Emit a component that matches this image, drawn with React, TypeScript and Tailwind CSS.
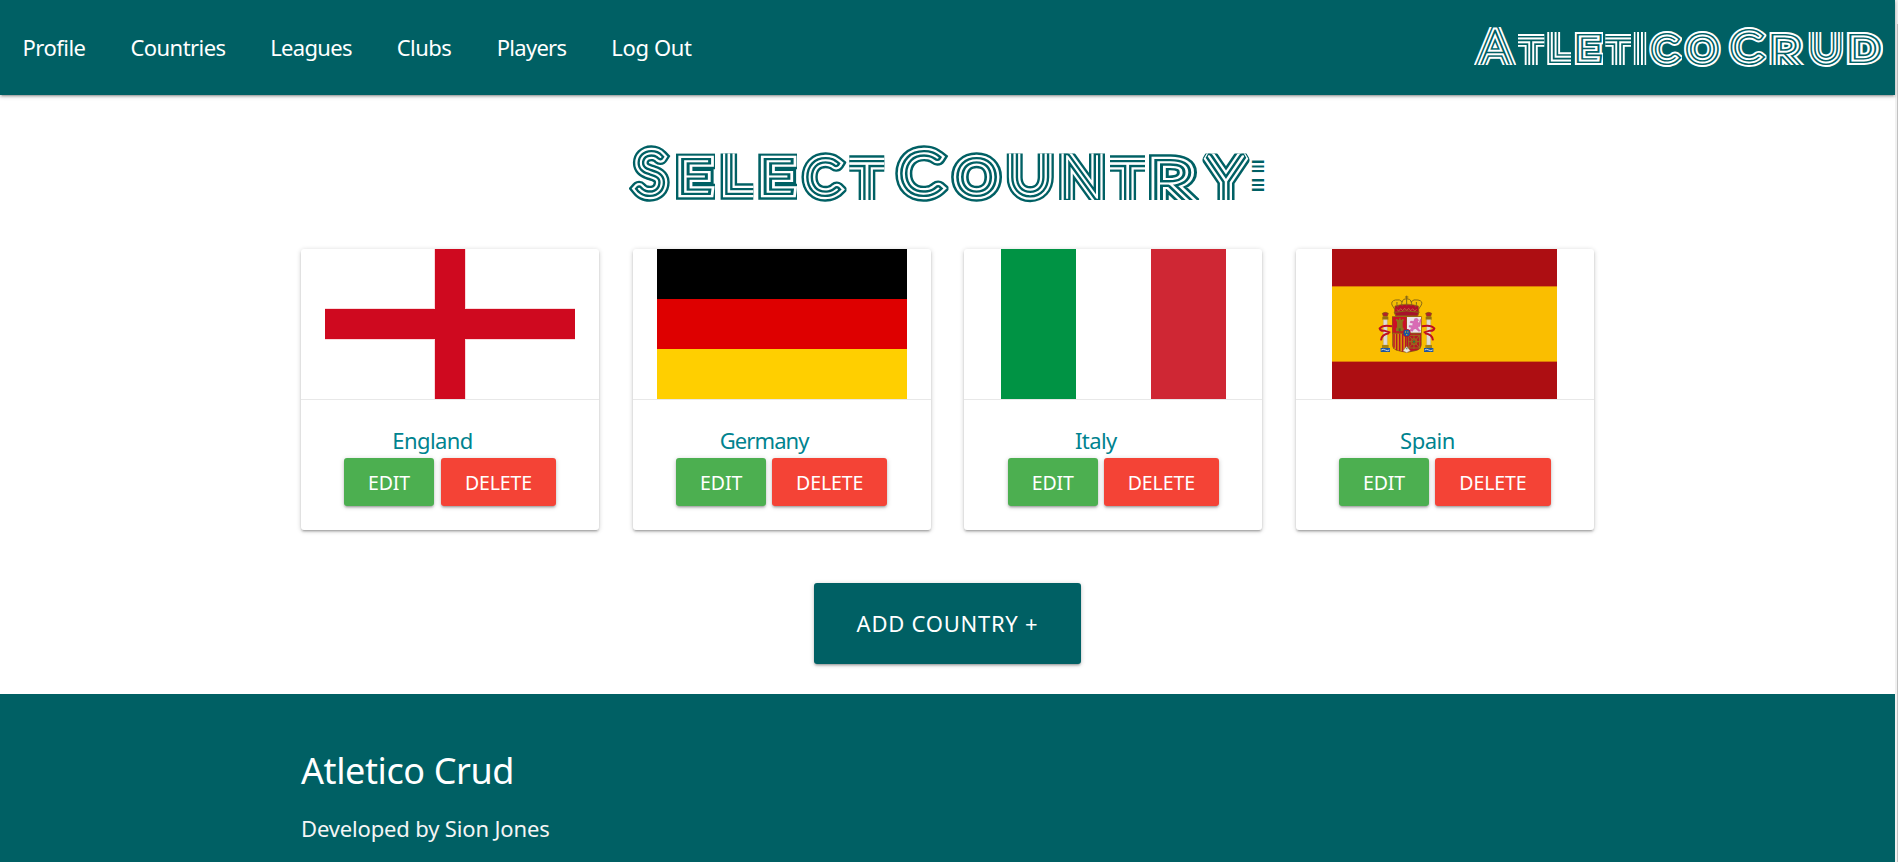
const FONT = "font-['Noto_Sans','Open_Sans',sans-serif]";
const SHADOW =
  'shadow-[0_2px_2px_0_rgba(0,0,0,0.14),0_3px_1px_-2px_rgba(0,0,0,0.12),0_1px_5px_0_rgba(0,0,0,0.2)]';

// ch, box left, box right, box top, box bottom, ink centre, font size, baseline, horizontal stretch, ink offset (em)
type Letter = [string, number, number, number, number, number, number, number, number, number];

const HEADING: Letter[] = [
  ['S', 9, 53, 48, 109, 30.7, 57, 98.7, 1, 0],
  ['e', 56, 95, 58.5, 105, 76.8, 43.4, 97.3, 1.25, 0.04],
  ['l', 100, 133.3, 58.5, 105, 124.5, 91, 97.3, 1, 0.045],
  ['e', 138.3, 177, 58.5, 105, 159.1, 43.4, 97.3, 1.25, 0.04],
  ['c', 180, 226.5, 55, 109, 203.5, 47.7, 98.7, 1.02, 0.02],
  ['t', 229.3, 264.3, 58.5, 105, 246.8, 105, 141.4, 1, 0],
  [' ', 0, 0, 0, 0, 270, 43, 97.3, 1, 0],
  ['C', 274, 328.5, 48, 109, 301.5, 58, 98.7, 1.06, 0.02],
  ['o', 330, 383, 55, 109, 356.5, 47.7, 98.7, 1.1, 0],
  ['u', 386.5, 434, 58.5, 109, 410.3, 63, 98.7, 1, 0],
  ['n', 439, 485, 58.5, 105, 462, 59, 103, 1, 0],
  ['t', 490, 525, 58.5, 105, 507.5, 105, 141.4, 1, 0],
  ['r', 529, 579.5, 58.5, 105, 555, 60, 109.2, 1.25, 0.045],
  ['y', 582.5, 629.5, 58.5, 105, 606, 62, 105, 1.06, 0],
];

const LOGO: Letter[] = [
  ['A', 4, 46.5, 27, 65, 25, 48, 64, 1, 0],
  ['t', 48, 74.3, 32, 65, 61.2, 77, 93.3, 1, 0],
  ['l', 76.7, 101, 32, 65, 94.8, 65, 58.9, 1, 0.045],
  ['e', 104.7, 133, 32, 65, 119.6, 29, 58.9, 1.23, 0.04],
  ['t', 135.3, 161, 32, 65, 148.2, 77, 93.3, 1, 0],
  ['i', 163.7, 176.3, 32, 65, 170, 80, 76, 1, 0],
  ['c', 178, 212, 29, 69, 195.5, 34, 60.8, 1.02, 0.02],
  ['o', 213.5, 251.5, 29, 69, 232.5, 34, 60.8, 1.08, 0],
  [' ', 0, 0, 0, 0, 254, 31, 59, 1, 0],
  ['C', 257.5, 296.5, 24, 69, 277.3, 40.7, 60.8, 1.04, 0.02],
  ['r', 299.3, 336, 32, 65, 317.6, 43, 69, 1.17, 0.045],
  ['u', 338.3, 373.5, 32, 69, 356, 45, 60.8, 1, 0],
  ['d', 376, 413.3, 31, 66, 394.1, 29, 58.9, 1.26, 0],
];

type StripedProps = {
  id: string;
  letters: Letter[];
  colon?: boolean;
  width: number;
  height: number;
  rings: number[];
  ink: string;
  paper: string;
};

// Neon-tube lettering: a hairline face stroked by alternating ink and paper layers.
function StripedText({ id, letters, colon, width, height, rings, ink, paper }: StripedProps) {
  return (
    <svg className="shrink-0" width={width} height={height} viewBox={`0 0 ${width} ${height}`}>
      <defs>
        {letters.map(([, x0, x1, y0, y1], i) => (
          <clipPath key={i} id={`${id}-${i}`}>
            <rect x={x0} y={y0} width={x1 - x0} height={y1 - y0} />
          </clipPath>
        ))}
      </defs>
      <g stroke={ink} fill={ink} strokeWidth={rings[0]} strokeMiterlimit={2}>
        <g id={id} className="font-[Lato] font-thin uppercase" textAnchor="middle">
          {letters.map(([ch, , , , , cx, size, base, sx, off], i) => (
            <g key={i} clipPath={`url(#${id}-${i})`}>
              <text xmlSpace="preserve" fontSize={size} transform={`translate(${cx - off * size * sx} ${base}) scale(${sx} 1)`}>
                {ch}
              </text>
            </g>
          ))}
        </g>
      </g>
      {rings.slice(1).map((w, i) => {
        const c = i % 2 === 0 ? paper : ink;
        return <use key={i} href={`#${id}`} stroke={c} fill={c} strokeWidth={w} strokeMiterlimit={2} />;
      })}
      {colon && (
        <>
          <text x="638" y="92" textAnchor="middle" fontSize="43" fill={ink} stroke={ink} strokeWidth="8" className="font-['Liberation_Sans']">
            :
          </text>
          <path d="M630 64.2h16M630 69.2h16M630 73.7h16M630 78.4h16M630 82.8h16M630 87.7h16M630 92.3h16M630 97.3h16" stroke={paper} strokeWidth="2.4" />
        </>
      )}
    </svg>
  );
}

const nav = [
  { label: 'Profile', cls: 'w-[108px] tracking-[-0.5px]' },
  { label: 'Countries', cls: 'w-[140px] tracking-[-0.55px]' },
  { label: 'Leagues', cls: 'w-[126px] tracking-[-0.7px]' },
  { label: 'Clubs', cls: 'w-[100px] tracking-[-0.5px]' },
  { label: 'Players', cls: 'w-[115px] tracking-[-0.7px]' },
  { label: 'Log Out', cls: 'w-[125px] tracking-[-0.35px]' },
];

function England() {
  return (
    <svg width="250" height="150" viewBox="0 0 250 150">
      <path fill="#f9d9dc" d="M109 0h32v59h109v32H141v59h-32V91H0V59h109z" />
      <path fill="#cf091f" d="M110 0h30v60h110v30H140v60h-30V90H0V60h110z" />
    </svg>
  );
}

function Germany() {
  return (
    <svg width="250" height="150" viewBox="0 0 250 150">
      <path d="M0 0h250v50H0z" fill="#000" />
      <path d="M0 50h250v50H0z" fill="#de0000" />
      <path d="M0 100h250v50H0z" fill="#ffcf00" />
    </svg>
  );
}

function Italy() {
  return (
    <svg width="225" height="150" viewBox="0 0 225 150">
      <path d="M0 0h75v150H0z" fill="#009344" />
      <path d="M150 0h75v150h-75z" fill="#cf2734" />
    </svg>
  );
}

function Pillar({ x }: { x: number }) {
  return (
    <g transform={`translate(${x} 0)`}>
      <path d="M-9 235q9-6 18 0l-3 9H-6z" fill="#b3202a" stroke="#7a5a10" strokeWidth="2" />
      <path d="M-9 245H9v9H-9z" fill="#94700f" />
      <path d="M-6 254H6v76H-6z" fill="#dedbd5" stroke="#a79b80" strokeWidth="1" />
      <path d="M-10 330h20v9h-20z" fill="#a98210" />
      <path d="M-14 339h28v12h-28z" fill="#1f56a0" />
      <path d="M-12 345q6-4 12 0t12 0" fill="none" stroke="#cdd8e0" strokeWidth="3" />
    </g>
  );
}

function Spain() {
  return (
    <svg width="225" height="150" viewBox="0 0 225 150">
      <path d="M0 0h225v150H0z" fill="#ad0e12" />
      <path d="M0 37h225v76H0z" fill="#dd7a08" />
      <path d="M0 38h225v74H0z" fill="#fabe00" />
      <g transform="scale(.33333) translate(-156 -42)">
        <Pillar x={316} />
        <Pillar x={446} />
        <path d="M337 274q-28-6-38 6 3 9 14 7l18 6M303 316q2-18 24-21M425 274q28-6 38 6-3 9-14 7l-18 6M459 316q-2-18-24-21" fill="none" stroke="#bd1022" strokeWidth="6" />
        <path d="M345 224l-9-14q-4-12 10-15 14-3 20 5 3-9 14-9t14 9q6-8 20-5 16 3 10 15l-9 14z" fill="#f3bd05" stroke="#8b6914" strokeWidth="3" />
        <path d="M345 213q35-11 70 0l2 21q-37-9-74 0z" fill="#b30f2a" stroke="#8b6914" strokeWidth="2" />
        <path d="M343 232q37-9 74 0l-4 11h-66z" fill="#a7112b" stroke="#8b6914" strokeWidth="3" />
        <path d="M354 217q-5-9-3-16M367 213q-4-8 0-15M393 213q4-8 0-15M406 217q5-9 3-16M380 212v-22M380 182v9M375 186h10" fill="none" stroke="#7d611c" strokeWidth="3" />
        <path d="M350 223l6 5 6-7 6 6 6-7 6 6 6-6 6 7 6-6 6 7 6-5" fill="none" stroke="#c08a3e" strokeWidth="2" />
        <path d="M336 244h89v84q0 14-14 19-20 4-31 6-11-2-30-6-14-5-14-19z" fill="#8c5a14" />
        <path d="M338 246h41v47h-41z" fill="#cb0f26" />
        <path d="M381 246h42v47h-42z" fill="#eee4ec" />
        <path d="M338 296h41v54q-18-1-29-5-12-5-12-18z" fill="#d99a08" />
        <path d="M342 296v42M350 296v49M359 296v52M368 296v54M377 296v54" stroke="#b8142b" strokeWidth="4.5" />
        <path d="M381 296h42v31q0 14-13 18l-29 6z" fill="#b81527" />
        <path d="M348 289v-9l3-3v-17l-3-3v-5h5v3h4v-5h5v5h4v-3h5v5l-3 3v17l3 3v9z" fill="#8d711a" />
        <path d="M356 289v-9h6v9" fill="#4c6a20" />
        <path d="M388 287l7-9-8-2 1-5 9 1 2-7-9-2 2-5 9 1 3-8 7-1 5 5-3 5 4 5 4-13 3 2-4 20-7 2 3 6 6 6-6 1-9-8-6 2-3 6z" fill="#d96bb5" stroke="#bb5198" strokeWidth="1" />
        <path d="M386 301h33v38h-33zM386 301l33 38M419 301l-33 38M402 299v43M384 320h37" fill="none" stroke="#987019" strokeWidth="3" />
        <circle cx="402" cy="320" r="9" fill="none" stroke="#987019" strokeWidth="3" />
        <circle cx="402" cy="320" r="3.5" fill="#2a7a41" />
        <circle cx="380" cy="294" r="12" fill="#b4122b" />
        <circle cx="380" cy="294" r="9.5" fill="#1257a5" />
        <path d="M375 289h3v4h-3zM382 289h3v4h-3zM378 297h4v4h-4z" fill="#c4a72b" />
        <path d="M369 347l11-13 11 13-11 6z" fill="#ece8df" stroke="#938047" strokeWidth="1.5" />
        <path d="M379 338h3v5h-3z" fill="#397b45" />
      </g>
    </svg>
  );
}

const countries = [
  { name: 'England', Flag: England, cls: 'tracking-[-0.6px]', gap: 'gap-[7px]', del: 'w-[115px]' },
  { name: 'Germany', Flag: Germany, cls: 'tracking-[-0.9px]', gap: 'gap-[6px]', del: 'w-[115px]' },
  { name: 'Italy', Flag: Italy, cls: 'tracking-[-0.6px]', gap: 'gap-[6px]', del: 'w-[115px]' },
  { name: 'Spain', Flag: Spain, cls: 'tracking-[-0.5px]', gap: 'gap-[6px]', del: 'w-[116px]' },
];

export default function App() {
  return (
    <div className={`flex h-[862px] w-[1898px] overflow-hidden bg-white text-[22px] ${FONT}`}>
      <div className="flex w-[1895px] shrink-0 flex-col">
        <header className={`relative flex h-[95px] shrink-0 items-center justify-between bg-[#006064] text-white ${SHADOW}`}>
          <nav className="flex pb-[2px]">
            {nav.map((n) => (
              <a key={n.label} href="#" className={`flex justify-center leading-[30px] whitespace-nowrap ${n.cls}`}>
                {n.label}
              </a>
            ))}
          </nav>
          <StripedText id="logo" letters={LOGO} width={425} height={95} rings={[12, 8.2, 4.9, 1]} ink="#ffffff" paper="#006064" />
        </header>

        <main className="flex h-[599px] shrink-0 flex-col items-center">
          <h1 className="flex h-[154px] w-full justify-center">
            <StripedText id="heading" colon letters={HEADING} width={655} height={154} rings={[15.4, 10.6, 6.2, 1.4]} ink="#006064" paper="#ffffff" />
          </h1>

          <section className="flex w-[1327px] justify-between px-[17px]">
            {countries.map(({ name, Flag, cls, gap, del }) => (
              <article key={name} className={`flex h-[281px] w-[298px] flex-col rounded-[3px] bg-white ${SHADOW}`}>
                <div className="flex h-[150px] justify-center">
                  <Flag />
                </div>
                <div className="flex flex-col items-center border-t border-[#e8e8e8] pt-[24px]">
                  <a href="#" className={`mr-[35px] mb-[2px] flex h-[32px] items-center text-[#00838f] ${cls}`}>
                    {name}
                  </a>
                  <div className={`flex text-[19.5px] tracking-[-0.1px] text-white ${gap}`}>
                    <button className={`h-[48px] w-[90px] rounded-[3px] bg-[#4caf50] pt-[2px] ${SHADOW}`}>EDIT</button>
                    <button className={`h-[48px] rounded-[3px] bg-[#f44336] pt-[2px] ${del} ${SHADOW}`}>DELETE</button>
                  </div>
                </div>
              </article>
            ))}
          </section>

          <button className={`mt-[53px] h-[81px] w-[267px] rounded-[3px] bg-[#006064] tracking-[0.75px] whitespace-nowrap text-white ${SHADOW}`}>
            ADD COUNTRY +
          </button>
        </main>

        <footer className="flex h-[168px] shrink-0 flex-col bg-[#006064] pt-[52px] pl-[301px]">
          <h5 className="text-[36px] leading-[50px] tracking-[-0.4px] text-white">Atletico Crud</h5>
          <p className="mt-[17px] leading-[30px] tracking-[-0.15px] text-[#f5f5f5]">Developed by Sion Jones</p>
        </footer>
      </div>
      <div className="flex flex-1 flex-col bg-[#f1f1f1]">
        <div className="mt-[24px] ml-[2px] flex-1 bg-[#c1c1c1]" />
      </div>
    </div>
  );
}
